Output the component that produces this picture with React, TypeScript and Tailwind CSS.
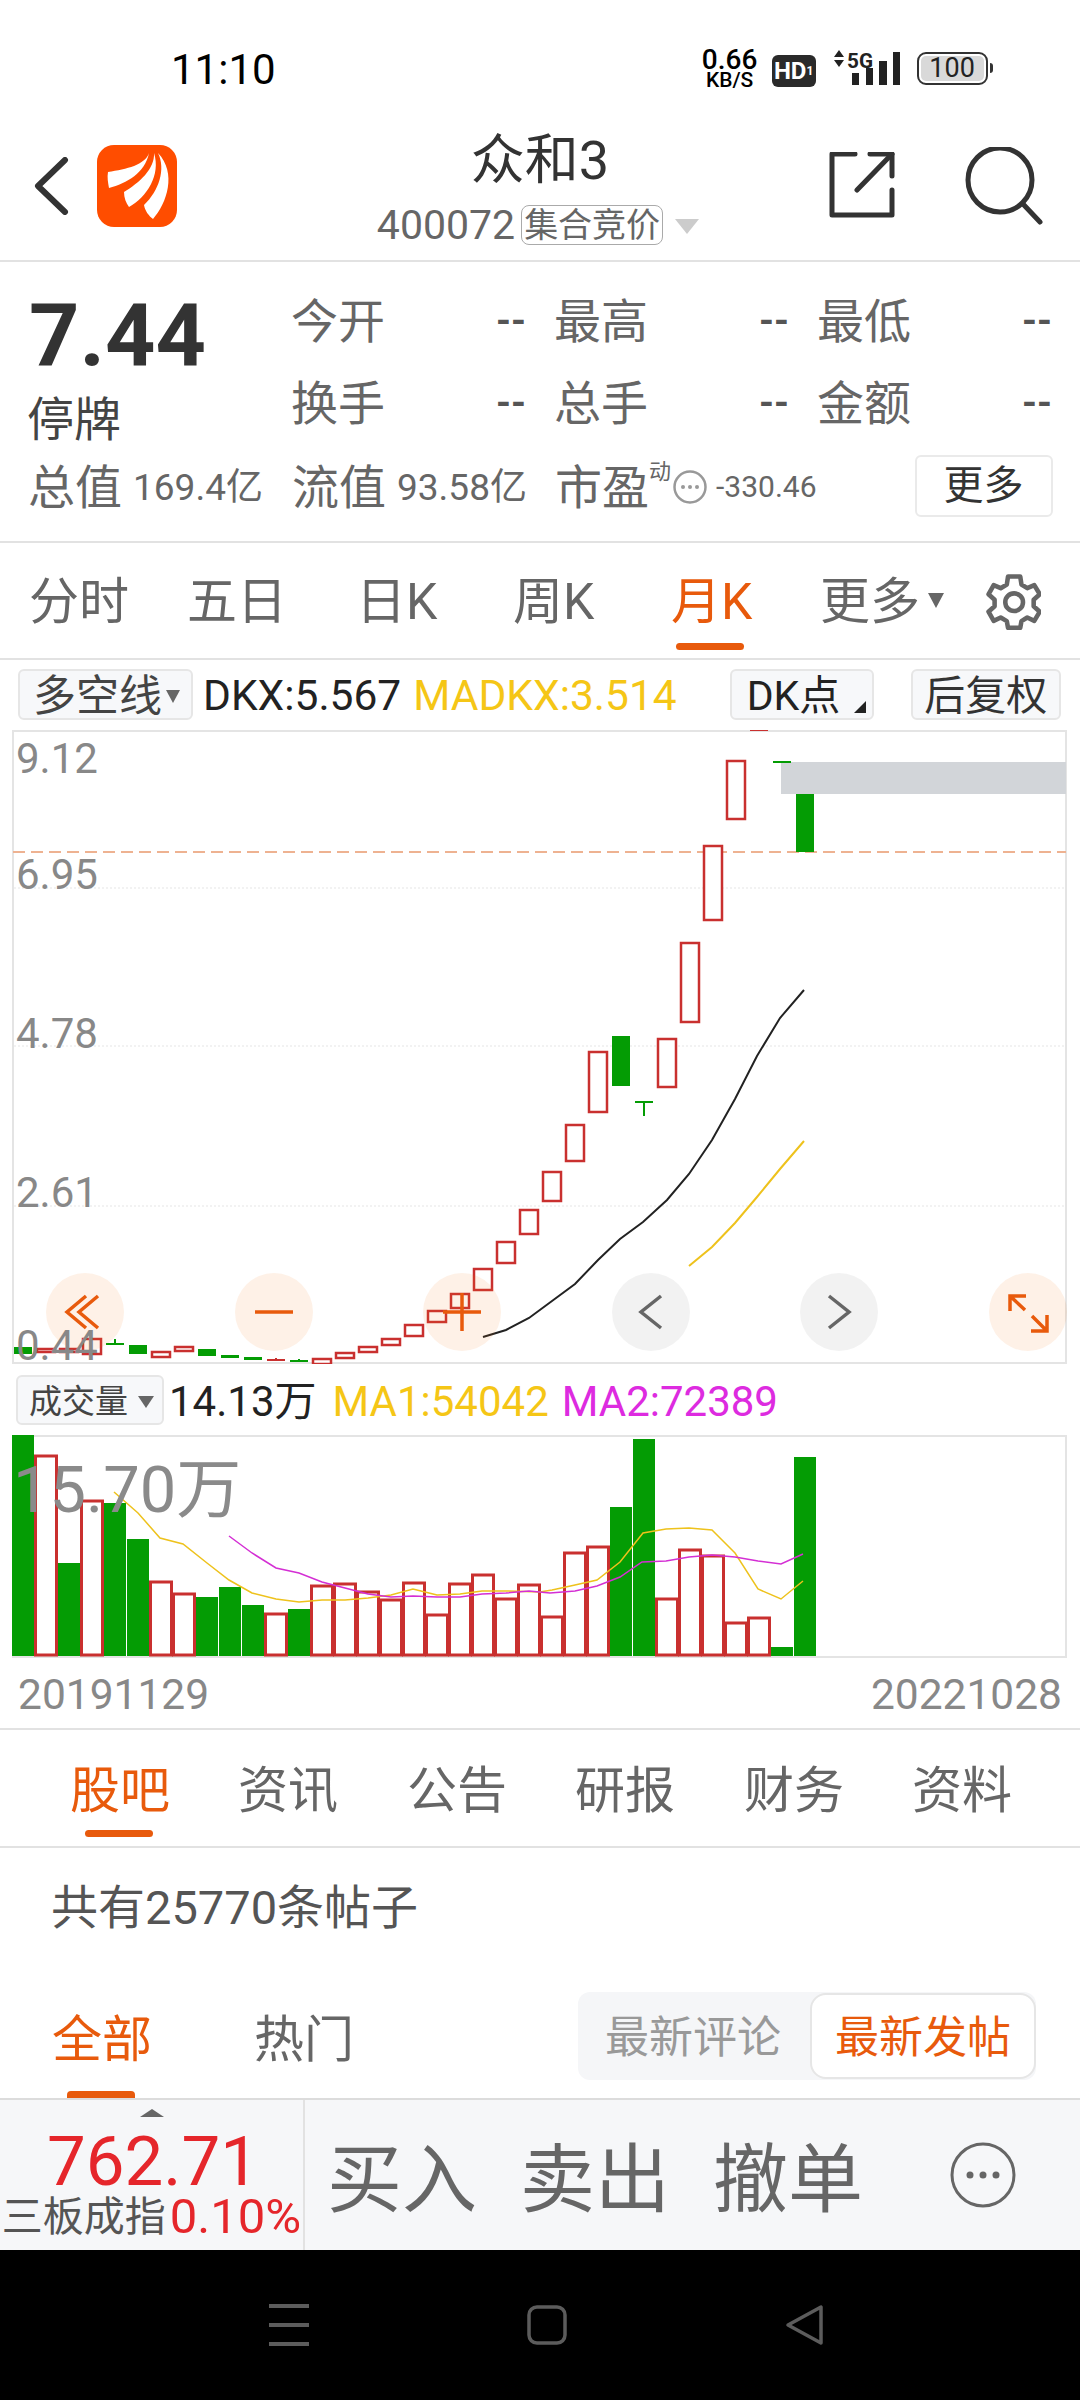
const RED = '#c9302f'
const GREEN = '#049c04'

// [index, top, bottom]
const redCandles = [
  [1, 1349, 1352], [2, 1349, 1352], [3, 1339, 1354], [6, 1352, 1357], [7, 1347, 1351],
  [13, 1359, 1364], [14, 1353, 1358], [15, 1347, 1352], [16, 1339, 1345], [17, 1325, 1336],
  [18, 1311, 1322], [19, 1294, 1308], [20, 1269, 1290], [21, 1242, 1263], [22, 1210, 1234],
  [23, 1172, 1201], [24, 1125, 1161], [25, 1052, 1112], [28, 1039, 1087], [29, 943, 1022],
  [30, 846, 920], [31, 761, 819],
]
const greenCandles = [
  [0, 1347, 1354], [5, 1345, 1354], [8, 1349, 1356], [9, 1355, 1358], [10, 1357, 1360],
  [26, 1036, 1086], [34, 794, 852],
]
const flatCandles = [
  [4, 1344, 1339, 1344, GREEN], [11, 1360, 1358, 1360, RED], [12, 1361, 1359, 1361, GREEN],
  [27, 1102, 1102, 1116, GREEN], [32, 730, 730, 730, RED], [33, 762, 762, 762, GREEN],
] as const

const volumes: [number, 'r' | 'g'][] = [
  [1435, 'g'], [1456, 'r'], [1563, 'g'], [1501, 'r'], [1503, 'g'], [1539, 'g'], [1582, 'r'],
  [1594, 'r'], [1597, 'g'], [1587, 'g'], [1605, 'g'], [1614, 'r'], [1609, 'g'], [1586, 'r'],
  [1584, 'r'], [1592, 'r'], [1600, 'r'], [1583, 'r'], [1615, 'r'], [1584, 'r'], [1575, 'r'],
  [1599, 'r'], [1585, 'r'], [1617, 'r'], [1553, 'r'], [1547, 'r'], [1507, 'g'], [1439, 'g'],
  [1599, 'r'], [1550, 'r'], [1556, 'r'], [1623, 'r'], [1618, 'r'], [1647, 'g'], [1457, 'g'],
]

const maBlack = '483,1337 506,1330 529,1318 552,1301 575,1284 598,1260 620,1239 643,1222 667,1200 689,1174 712,1140 735,1099 757,1056 780,1018 804,990'
const maYellow = '689,1266 712,1247 735,1223 757,1197 780,1169 804,1141'
const volYellow = '114,1492 138,1513 160,1538 183,1544 207,1563 229,1580 252,1593 276,1599 299,1602 322,1600 345,1600 368,1598 391,1595 413,1589 437,1595 460,1594 482,1591 506,1591 540,1592 552,1590 575,1585 597,1580 620,1562 643,1533 666,1529 689,1528 712,1530 735,1553 758,1589 781,1599 803,1581'
const volMagenta = '229,1536 252,1553 276,1568 299,1573 322,1582 345,1588 368,1594 391,1597 413,1596 437,1597 460,1597 482,1594 506,1593 529,1591 550,1593 575,1591 597,1586 620,1577 642,1562 666,1561 689,1557 712,1555 735,1557 758,1561 781,1564 803,1554'

const cx = (i: number) => 23 + 23 * i

function StatusBar() {
  return (
    <div className="flex h-[130px] items-start text-black">
      <span className="ml-[171px] mt-[49px] text-[42px] leading-[42px]">11:10</span>
      <div className="ml-[427px] mt-[50px] flex w-[54px] flex-col items-center font-medium leading-none">
        <span className="text-[28px] leading-[20px]">0.66</span>
        <span className="mt-[3px] text-[21px] leading-[15px]">KB/S</span>
      </div>
      <span className="ml-[15px] mt-[55px] flex h-[32px] w-[44px] items-center justify-center rounded-[6px] bg-[#2a2a2a] text-[24px] font-bold leading-none text-white">
        HD<span className="text-[12px] leading-none">1</span>
      </span>
      <div className="ml-[17px] mt-[50px] flex h-[35px] w-[68px]">
        <svg width="68" height="35" viewBox="833 50 68 35" fill="#222">
          <path d="M839 50l5 7h-10zM839 67l5-7h-10z" />
          <path d="M852 73h7v12h-7zM866 68h7v17h-7zM879 61h8v24h-8zM893 52h7v33h-7z" />
          <text x="847" y="68" fontSize="21" fontWeight="700" fontFamily="Roboto" textLength="26" lengthAdjust="spacingAndGlyphs">5G</text>
        </svg>
      </div>
      <div className="ml-[16px] mt-[52px] flex h-[33px] w-[71px] items-center justify-center rounded-[9px] border-2 border-[#333] p-[2px]">
        <span className="flex h-full w-full items-center justify-center rounded-[5px] bg-[#d9d9d9] text-[27px] leading-none text-[#222]">100</span>
      </div>
      <span className="ml-[2px] mt-[63px] h-[10px] w-[3px] rounded-r-sm bg-[#333]" />
    </div>
  )
}

function Logo() {
  return (
    <svg width="80" height="82" viewBox="0 0 80 82" className="ml-[27px]">
      <rect width="80" height="82" rx="17" fill="#ff4d00" />
      <path d="M52 8C48 20 30 24 11 27C10 32 11 38 12 43C30 38 48 28 52 8Z" fill="#fff" />
      <path d="M57 8C58 24 42 38 27 47C27 53 29 58 32 62C50 52 64 30 57 8Z" fill="#fff" />
      <path d="M61 8C69 24 62 46 47 60C48 66 52 71 56 74C70 58 80 28 61 8Z" fill="#fff" />
    </svg>
  )
}

function Header() {
  return (
    <div className="flex h-[132px] items-start border-b-2 border-[#e2e2e2]">
      <div className="flex w-[260px] items-center pt-[15px]">
        <svg width="36" height="58" viewBox="0 0 36 58" fill="none" stroke="#333" strokeWidth="6" strokeLinecap="round" strokeLinejoin="round" className="ml-[34px]">
          <path d="M31 3L4 29L31 55" />
        </svg>
        <Logo />
      </div>
      <div className="flex w-[560px] flex-col items-center pt-[7px]">
        <span className="text-[54px] leading-[48px] text-[#333]">众和3</span>
        <div className="mr-[4px] mt-[20px] flex items-center text-[#666]">
          <span className="text-[41px] leading-[40px]">400072</span>
          <span className="ml-[6px] flex h-[40px] w-[142px] items-center justify-center rounded-[8px] border border-[#aaa] text-[34px] leading-none">集合竞价</span>
          <span className="ml-[12px] mt-[2px] h-0 w-0 border-x-[12px] border-t-[15px] border-x-transparent border-t-[#ccc]" />
        </div>
      </div>
      <svg width="66" height="66" viewBox="829 153 66 66" fill="none" stroke="#333" strokeWidth="5" strokeLinecap="round" strokeLinejoin="round" className="ml-[9px] mt-[22px]">
        <path d="M855 155H832V216H892V191" />
        <path d="M870 155H892V177" />
        <path d="M892 155L857 191" />
      </svg>
      <svg width="78" height="78" viewBox="965 147 78 78" fill="none" stroke="#333" strokeWidth="5" strokeLinecap="round" className="ml-[70px] mt-[17px]">
        <circle cx="1000" cy="180" r="32" />
        <path d="M1023 204L1040 222" />
      </svg>
    </div>
  )
}

function Stat({ label }: { label: string }) {
  return (
    <div className="flex w-[232px] items-center justify-between">
      <span className="ml-[-2px] text-[47px] leading-none text-[#666]">{label}</span>
      <span className="mr-[-1px] text-[38px] font-bold leading-none text-[#555]">--</span>
    </div>
  )
}

function Quote() {
  return (
    <div className="flex h-[281px] flex-col border-b-2 border-[#e2e2e2]">
      <div className="flex h-[182px] pl-[29px]">
        <div className="flex w-[264px] flex-col">
          <span className="mt-[28px] text-[88px] font-bold leading-[92px] text-[#333]">7.44</span>
          <span className="mt-[16px] ml-[-2px] text-[47px] leading-[44px] text-[#444]">停牌</span>
        </div>
        <div className="flex flex-col pt-[18px]">
          <div className="flex h-[83px] gap-[31px]">
            <Stat label="今开" />
            <Stat label="最高" />
            <Stat label="最低" />
          </div>
          <div className="flex h-[83px] gap-[31px]">
            <Stat label="换手" />
            <Stat label="总手" />
            <Stat label="金额" />
          </div>
        </div>
      </div>
      <div className="flex h-[84px] items-center pl-[28px] pt-[2px] text-[#666]">
        <div className="flex w-[264px] items-center">
          <span className="text-[47px] leading-none">总值</span>
          <span className="ml-[11px] text-[37px] leading-none">169.4亿</span>
        </div>
        <div className="flex w-[263px] items-center">
          <span className="text-[47px] leading-none">流值</span>
          <span className="ml-[11px] text-[37px] leading-none">93.58亿</span>
        </div>
        <span className="text-[47px] leading-none">市盈</span>
        <span className="mb-[30px] text-[22px] leading-none">动</span>
        <svg width="34" height="34" viewBox="0 0 34 34" fill="none" className="ml-[2px]">
          <circle cx="17" cy="17" r="15.5" stroke="#999" strokeWidth="2.5" />
          <circle cx="10" cy="17" r="2" fill="#999" />
          <circle cx="17" cy="17" r="2" fill="#999" />
          <circle cx="24" cy="17" r="2" fill="#999" />
        </svg>
        <span className="ml-[9px] text-[30px] leading-none">-330.46</span>
        <button className="mb-[2px] ml-[98px] flex h-[62px] w-[138px] items-center justify-center rounded-[6px] border-2 border-[#eaeaea] text-[40px] leading-none text-[#333]">更多</button>
      </div>
    </div>
  )
}

function PeriodTabs() {
  return (
    <div className="flex h-[117px] items-start border-b-2 border-[#e2e2e2] pl-[29px] pt-[36px] text-[50px] leading-[47px] text-[#666]">
      <span className="w-[158px]">分时</span>
      <span className="w-[169px]">五日</span>
      <span className="w-[157px]">日K</span>
      <span className="w-[158px]">周K</span>
      <div className="flex w-[149px] flex-col">
        <span className="text-[#e85a0c]">月K</span>
        <span className="ml-[5px] mt-[17px] h-[7px] w-[68px] rounded-full bg-[#e85a0c]" />
      </div>
      <span>更多</span>
      <span className="ml-[8px] mt-[14px] h-0 w-0 border-x-[8px] border-t-[15px] border-x-transparent border-t-[#666]" />
      <svg width="58" height="58" viewBox="60 25 190 190" fill="none" stroke="#666" strokeWidth="15" strokeLinejoin="round" className="ml-[39px] mt-[-7px]">
        <path d="M142 40H182L186 66L205 78L228 68L246 98L226 116V137L246 155L228 185L205 174L186 186L182 208H142L138 186L118 174L95 185L78 155L98 137V116L78 98L95 68L118 78L138 66Z" />
        <circle cx="162" cy="124" r="29" />
      </svg>
    </div>
  )
}

function IndicatorBar() {
  return (
    <div className="flex h-[70px] items-start pl-[18px] pt-[9px] text-[42.5px] leading-none">
      <button className="flex h-[51px] w-[175px] items-center rounded-[6px] border-2 border-[#e6e6e6] bg-[#f7f8fa] pl-[13px] pt-[3px] text-[43px] text-[#444]">
        多空线
        <span className="ml-[4px] h-0 w-0 border-x-[7px] border-t-[13px] border-x-transparent border-t-[#666]" />
      </button>
      <span className="ml-[10px] mt-[6px] text-[#222]">DKX:5.567</span>
      <span className="ml-[12px] mt-[6px] text-[#f5c616]">MADKX:3.514</span>
      <button className="relative ml-[53px] flex h-[51px] w-[144px] items-center rounded-[6px] border-2 border-[#e6e6e6] bg-[#f7f8fa] pl-[15px] pt-[3px] text-[41px] text-[#222]">
        DK点
        <span className="absolute bottom-[5px] right-[6px] h-0 w-0 border-b-[12px] border-l-[12px] border-b-[#222] border-l-transparent" />
      </button>
      <button className="ml-[37px] flex h-[51px] w-[150px] items-center justify-center rounded-[6px] border-2 border-[#e6e6e6] bg-[#f7f8fa] pt-[3px] text-[41px] text-[#333]">后复权</button>
    </div>
  )
}

function PriceLabel({ top, text }: { top: string; text: string }) {
  return <span className={`absolute left-[4px] text-[42px] leading-none text-[#888] ${top}`}>{text}</span>
}

function Round({ tone, children }: { tone: 'o' | 'g'; children: React.ReactNode }) {
  return (
    <span className={`flex h-[78px] w-[78px] items-center justify-center rounded-full ${tone === 'o' ? 'bg-[#f97316]/10' : 'bg-black/5'}`}>
      <svg width="78" height="78" viewBox="0 0 78 78" fill="none" stroke={tone === 'o' ? '#e85a0c' : '#666'} strokeWidth="3.5">
        {children}
      </svg>
    </span>
  )
}

function KLineChart() {
  return (
    <div className="relative ml-[12px] h-[634px] w-[1055px]">
      <svg width="1055" height="634" viewBox="12 730 1055 634" className="block">
        <rect x="13" y="731" width="1053" height="632" fill="#fff" stroke="#e4e4e4" strokeWidth="2" />
        {[888, 1046, 1206].map((y) => (
          <line key={y} x1="14" x2="1066" y1={y} y2={y} stroke="#eee" strokeWidth="1.5" strokeDasharray="2 2" />
        ))}
        <line x1="13" x2="1066" y1="852" y2="852" stroke="#eeb291" strokeWidth="2" strokeDasharray="12 6" />
        <rect x="781" y="762" width="285" height="32" fill="#d2d5d9" />
        {redCandles.map(([i, t, b]) => (
          <rect key={i} x={cx(i) - 9} y={t} width="18" height={b - t} fill="#fff" stroke={RED} strokeWidth="2.5" />
        ))}
        {greenCandles.map(([i, t, b]) => (
          <rect key={i} x={cx(i) - 9} y={t} width="18" height={b - t} fill={GREEN} />
        ))}
        {flatCandles.map(([i, y, y1, y2, c]) => (
          <g key={i} stroke={c} strokeWidth="2">
            <line x1={cx(i) - 9} x2={cx(i) + 9} y1={y} y2={y} />
            <line x1={cx(i)} x2={cx(i)} y1={y1} y2={y2} />
          </g>
        ))}
        <polyline points={maBlack} fill="none" stroke="#222" strokeWidth="2" />
        <polyline points={maYellow} fill="none" stroke="#eec21c" strokeWidth="2" />
      </svg>
      <div className="absolute left-[34px] top-[543px] flex w-[1021px] justify-between">
        <Round tone="o"><path d="M40 23L21 39L40 55M52 23L33 39L52 55" /></Round>
        <Round tone="o"><path d="M20 39H58" /></Round>
        <Round tone="o"><path d="M20 39H58M39 20V58" /></Round>
        <Round tone="g"><path d="M49 23L29 39L49 55" /></Round>
        <Round tone="g"><path d="M29 23L49 39L29 55" /></Round>
        <Round tone="o"><path d="M21 38V23H37M21 23L36 37M58 42V58H42M58 58L43 43" /></Round>
      </div>
      <PriceLabel top="top-[8px]" text="9.12" />
      <PriceLabel top="top-[124px]" text="6.95" />
      <PriceLabel top="top-[283px]" text="4.78" />
      <PriceLabel top="top-[442px]" text="2.61" />
      <PriceLabel top="top-[595px]" text="0.44" />
    </div>
  )
}

function VolumeChart() {
  return (
    <div className="relative ml-[12px] h-[223px] w-[1055px]">
      <svg width="1055" height="223" viewBox="12 1435 1055 223" className="block">
        <rect x="13" y="1436" width="1053" height="221" fill="#fff" stroke="#e4e4e4" strokeWidth="2" />
        {volumes.map(([top, kind], i) =>
          kind === 'g' ? (
            <rect key={i} x={cx(i) - 11} y={top} width="22" height={1656 - top} fill={GREEN} />
          ) : (
            <rect key={i} x={cx(i) - 10.5} y={top} width="21" height={1655 - top} fill="#fff" stroke={RED} strokeWidth="3" />
          ),
        )}
        <polyline points={volYellow} fill="none" stroke="#eec21c" strokeWidth="1.5" />
        <polyline points={volMagenta} fill="none" stroke="#d42fd4" strokeWidth="1.5" />
      </svg>
      <span className="absolute left-[1px] top-[23px] text-[65px] leading-none text-[#8a8a8a]">15.70万</span>
    </div>
  )
}

function VolumeBar() {
  return (
    <div className="flex h-[71px] items-start pl-[16px] pt-[11px] text-[42px] leading-none">
      <button className="flex h-[50px] w-[148px] items-center rounded-[6px] border-2 border-[#e6e6e6] bg-[#f7f8fa] pl-[11px] pt-[3px] text-[33px] text-[#444]">
        成交量
        <span className="ml-[10px] h-0 w-0 border-x-[8px] border-t-[12px] border-x-transparent border-t-[#666]" />
      </button>
      <span className="ml-[5px] mt-[6px] text-[#222]">14.13万</span>
      <span className="ml-[16px] mt-[6px] text-[#f5c616]">MA1:54042</span>
      <span className="ml-[13px] mt-[6px] text-[#dd2be0]">MA2:72389</span>
    </div>
  )
}

const newsTabs = [
  ['股吧', 'w-[168px]'],
  ['资讯', 'w-[169px]'],
  ['公告', 'w-[168px]'],
  ['研报', 'w-[169px]'],
  ['财务', 'w-[168px]'],
  ['资料', ''],
]

function NewsTabs() {
  return (
    <div className="flex h-[118px] items-start border-b-2 border-[#e2e2e2] pl-[70px] pt-[37px] text-[50px] leading-[48px] text-[#666]">
      {newsTabs.map(([label, w], i) => (
        <div key={label} className={`flex flex-col ${w}`}>
          <span className={i === 0 ? 'text-[#e85a0c]' : ''}>{label}</span>
          {i === 0 && <span className="ml-[15px] mt-[15px] h-[7px] w-[68px] rounded-full bg-[#e85a0c]" />}
        </div>
      ))}
    </div>
  )
}

function Posts() {
  return (
    <div className="flex h-[250px] flex-col">
      <span className="ml-[51px] mt-[37px] text-[47px] leading-[46px] text-[#555]">共有25770条帖子</span>
      <div className="mt-[61px] flex items-start pl-[52px]">
        <div className="flex w-[202px] flex-col pt-[24px]">
          <span className="text-[50px] leading-[48px] text-[#e85a0c]">全部</span>
          <span className="ml-[15px] mt-[27px] h-[7px] w-[68px] rounded-t-[4px] bg-[#e85a0c]" />
        </div>
        <span className="w-[324px] pt-[24px] text-[50px] leading-[48px] text-[#666]">热门</span>
        <div className="flex h-[88px] w-[458px] items-center rounded-[12px] bg-[#f5f6f8]">
          <span className="w-[232px] pl-[27px] pt-[3px] text-[44px] leading-none text-[#999]">最新评论</span>
          <span className="flex h-[86px] w-[226px] items-center justify-center rounded-[16px] border-2 border-[#e6e6e6] bg-white pt-[3px] text-[44px] leading-none text-[#e85a0c]">最新发帖</span>
        </div>
      </div>
    </div>
  )
}

function TradeBar() {
  return (
    <div className="flex h-[152px] border-t-2 border-[#dcdcdc] bg-[#f6f7f9]">
      <div className="flex w-[305px] flex-col items-center border-r-2 border-[#e2e2e2]">
        <span className="mt-[9px] h-0 w-0 border-x-[12px] border-b-[8px] border-x-transparent border-b-[#666]" />
        <span className="ml-[3px] mt-[11px] text-[69px] leading-[68px] text-[#e5262b]">762.71</span>
        <div className="flex items-center">
          <span className="text-[41px] leading-[42px] text-[#555]">三板成指</span>
          <span className="ml-[4px] text-[49px] leading-[42px] text-[#e5262b]">0.10%</span>
        </div>
      </div>
      <div className="flex items-center pl-[22px] text-[75px] leading-none text-[#666]">
        <span className="mt-[10px] w-[193px]">买入</span>
        <span className="mt-[10px] w-[193px]">卖出</span>
        <span className="mt-[10px] w-[237px]">撤单</span>
        <svg width="66" height="66" viewBox="0 0 66 66" fill="none">
          <circle cx="33" cy="33" r="31" stroke="#666" strokeWidth="3" />
          <circle cx="20" cy="33" r="3.5" fill="#666" />
          <circle cx="33" cy="33" r="3.5" fill="#666" />
          <circle cx="46" cy="33" r="3.5" fill="#666" />
        </svg>
      </div>
    </div>
  )
}

function NavBar() {
  return (
    <div className="flex h-[150px] items-center bg-black pl-[269px]">
      <svg width="40" height="44" viewBox="0 0 40 44" stroke="#5c5c5c" strokeWidth="4">
        <path d="M0 3H40M0 22H40M0 41H40" />
      </svg>
      <svg width="40" height="40" viewBox="0 0 40 40" fill="none" stroke="#5c5c5c" strokeWidth="3.5" className="ml-[218px]">
        <rect x="2" y="2" width="36" height="36" rx="8" />
      </svg>
      <svg width="40" height="42" viewBox="0 0 40 42" fill="none" stroke="#5c5c5c" strokeWidth="3.5" strokeLinejoin="round" className="ml-[218px]">
        <path d="M36 3V39L3 21Z" />
      </svg>
    </div>
  )
}

export default function App() {
  return (
    <div className="flex h-[2400px] w-[1080px] flex-col overflow-hidden bg-white [font-family:Roboto,'Noto_Sans_CJK_SC',sans-serif]">
      <StatusBar />
      <Header />
      <Quote />
      <PeriodTabs />
      <IndicatorBar />
      <KLineChart />
      <VolumeBar />
      <VolumeChart />
      <div className="flex h-[72px] items-center justify-between border-b-2 border-[#e2e2e2] px-[18px] pt-[4px] text-[42.5px] leading-none text-[#888]">
        <span>20191129</span>
        <span>20221028</span>
      </div>
      <NewsTabs />
      <Posts />
      <TradeBar />
      <NavBar />
    </div>
  )
}
